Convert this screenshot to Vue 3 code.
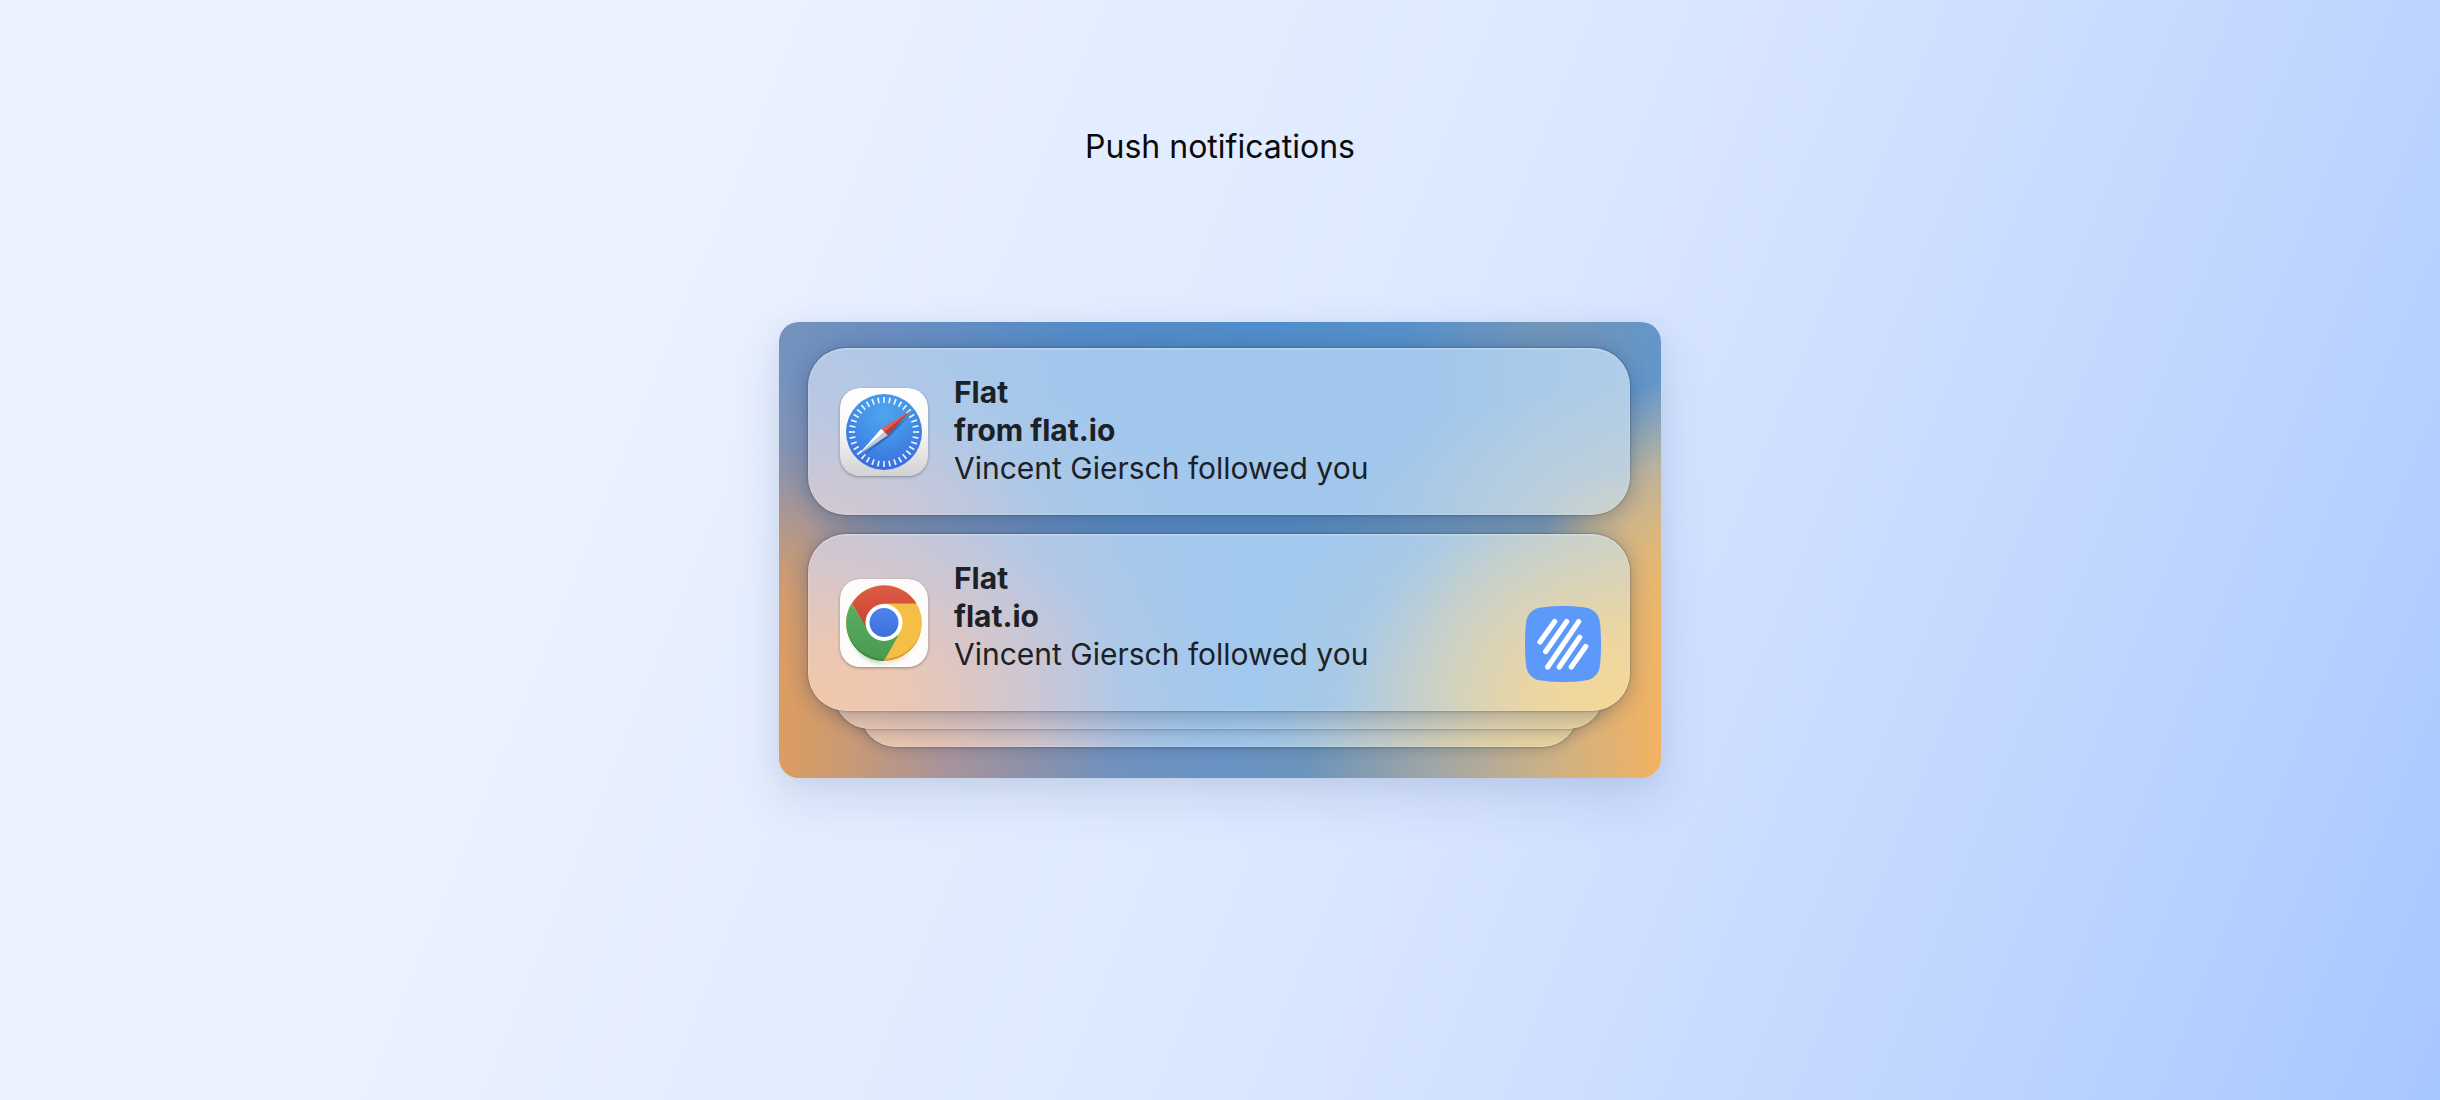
<script setup>
const notifications = [
  { id: 'safari', app: 'Safari', title: 'Flat', source: 'from flat.io', message: 'Vincent Giersch followed you', stacked: false },
  { id: 'chrome', app: 'Chrome', title: 'Flat', source: 'flat.io', message: 'Vincent Giersch followed you', stacked: true },
]
</script>

<template>
  <main class="page">
    <h1 class="heading">Push notifications</h1>

    <section class="desktop" aria-label="Notifications">
      <div v-for="n in notifications" :key="n.id" class="group">
        <article class="notification" :class="n.id">
          <svg v-if="n.id === 'safari'" class="app-icon" viewBox="0 0 88 88" role="img" :aria-label="n.app">
            <defs>
              <linearGradient id="safari-tile" x1="0" y1="0" x2="0" y2="1">
                <stop offset="0" stop-color="#ffffff" />
                <stop offset="0.45" stop-color="#fafafa" />
                <stop offset="1" stop-color="#d2d2d4" />
              </linearGradient>
              <radialGradient id="safari-dial" cx="0.5" cy="0.25" r="0.8">
                <stop offset="0" stop-color="#4fa5ec" />
                <stop offset="0.45" stop-color="#4391e9" />
                <stop offset="1" stop-color="#3a66dc" />
              </radialGradient>
            </defs>
            <rect width="88" height="88" rx="20" fill="url(#safari-tile)" />
            <circle cx="44" cy="44" r="38" fill="url(#safari-dial)" />
            <circle cx="44" cy="44" r="32" fill="none" stroke="#eaf4ff" stroke-width="6" pathLength="360" stroke-dasharray="3 7" stroke-dashoffset="1.5" />
            <path d="M72 25 49 49 21 69z" fill="#16336f" opacity="0.4" />
            <path d="M71 22.500 41.200 40.800 44.300 44z" fill="#ec5a4b" />
            <path d="M71 22.500 44.300 44 47.800 47.300z" fill="#c23a35" />
            <path d="M18 67 41.200 40.800 44.300 44z" fill="#ffffff" />
            <path d="M18 67 44.300 44 47.800 47.300z" fill="#c9ccd2" />
          </svg>

          <svg v-else class="app-icon" viewBox="0 0 88 88" role="img" :aria-label="n.app">
            <defs>
              <linearGradient id="chrome-red" x1="0" y1="0" x2="0" y2="1">
                <stop offset="0" stop-color="#de5b48" />
                <stop offset="1" stop-color="#c9432f" />
              </linearGradient>
              <linearGradient id="chrome-green" x1="0" y1="0" x2="0" y2="1">
                <stop offset="0" stop-color="#5aae62" />
                <stop offset="1" stop-color="#4a9950" />
              </linearGradient>
              <linearGradient id="chrome-blue" x1="0" y1="0" x2="0" y2="1">
                <stop offset="0" stop-color="#4f83ea" />
                <stop offset="1" stop-color="#3b70dd" />
              </linearGradient>
              <filter id="chrome-shadow" x="-20%" y="-20%" width="140%" height="140%">
                <feGaussianBlur stdDeviation="2.5" />
              </filter>
            </defs>
            <rect width="88" height="88" rx="20" fill="#fdfcfb" />
            <path d="M12 52a32 32 0 0 0 32 32z" fill="#3f8f48" opacity="0.5" filter="url(#chrome-shadow)" />
            <path d="M76 52a32 32 0 0 1-32 32z" fill="#e0a83c" opacity="0.4" filter="url(#chrome-shadow)" />
            <circle cx="44" cy="44" r="38" fill="#f3bf45" />
            <path d="M11.500 24.500A38 38 0 0 0 44 82L58 57 44 44 28 50z" fill="url(#chrome-green)" />
            <path d="M12 24.500a38 38 0 0 1 64.500 0H44V44L26 48z" fill="url(#chrome-red)" />
            <path d="M6.800 50a38 38 0 0 0 37.200 32v-2A38 38 0 0 1 6.800 50" fill="#3d8a45" />
            <path d="M81.200 50A38 38 0 0 1 44 82v-2a38 38 0 0 0 37.200-30" fill="#d99a36" />
            <circle cx="44" cy="43.500" r="18.500" fill="#ffffff" />
            <circle cx="44" cy="43.500" r="14.500" fill="url(#chrome-blue)" />
          </svg>

          <div class="text">
            <h2 class="title">{{ n.title }}</h2>
            <p class="source">{{ n.source }}</p>
            <p class="message">{{ n.message }}</p>
          </div>

          <svg v-if="n.stacked" class="site-icon" viewBox="0 0 76 76" role="img" aria-label="Flat">
            <path d="M38 0C48 0 58 1 63 2C69 4 73 8 74.500 14C75.500 20 76 28 76 38C76 48 75.500 56 74.500 62C73 68 69 72 63 74C58 75 48 76 38 76C28 76 18 75 13 74C7 72 3 68 1.500 62C.5 56 0 48 0 38C0 28 .5 20 1.500 14C3 8 7 4 13 2C18 1 28 0 38 0z" fill="#5d98fb" />
            <path d="M29.700 15.600 15 36M41.700 15.600 20.700 45.600M53.700 15.600 22.700 61M54.700 31.300 34.300 61M60.700 40.600 46.300 61" fill="none" stroke="#ffffff" stroke-width="5.200" stroke-linecap="round" />
          </svg>
        </article>

        <template v-if="n.stacked">
          <div class="layer middle"></div>
          <div class="layer back"></div>
        </template>
      </div>
    </section>
  </main>
</template>

<style>
body {
  margin: 0;
}
</style>

<style scoped>
.page {
  box-sizing: border-box;
  min-height: 100vh;
  padding: 127px 24px;
  display: flex;
  flex-direction: column;
  align-items: center;
  gap: 155px;
  font-family: Inter, "Liberation Sans", sans-serif;
  background: linear-gradient(112deg, #ebf1ff 0%, #eaf1ff 28%, #deeaff 52%, #d6e4ff 62%, #bfd5ff 83%, #a7c7ff 100%);
}

.heading {
  margin: 0;
  font-size: 32px;
  line-height: 40px;
  font-weight: 400;
  color: #0a0a0c;
}

.desktop {
  position: relative;
  isolation: isolate;
  box-sizing: border-box;
  width: 100%;
  max-width: 882px;
  padding: 26px 31px 31px 29px;
  display: flex;
  flex-direction: column;
  gap: 19px;
  border-radius: 20px;
  background:
    radial-gradient(ellipse 14% 76% at 0% 88%, #dd9c5f 0%, rgba(205, 155, 122, 0.85) 40%, rgba(170, 150, 155, 0.4) 70%, rgba(140, 148, 178, 0) 100%),
    radial-gradient(ellipse 18% 72% at 102% 84%, #f0b566 0%, rgba(226, 190, 125, 0.95) 45%, rgba(215, 190, 145, 0.7) 75%, rgba(150, 165, 175, 0) 100%),
    radial-gradient(ellipse 16% 24% at 87% 0%, rgba(116, 149, 182, 0.9) 0%, rgba(100, 147, 190, 0) 100%),
    linear-gradient(90deg, #7592bd 0%, #6a8ec0 12%, #548bc8 35%, #508dca 55%, #6296cc 100%);
  box-shadow: 0 20px 50px rgba(40, 60, 110, 0.13), 0 4px 24px rgba(40, 60, 110, 0.05);
}

/* warm glow rising from the bottom edge of the wallpaper */
.desktop::before {
  content: "";
  position: absolute;
  inset: 0;
  z-index: -1;
  border-radius: inherit;
  background: linear-gradient(90deg, #dd9d5f 0%, #c0987f 11%, #a8949b 19%, #8b91ab 29%, #7092be 38%, #6893c4 50%, #6c95bb 60%, #a0a6a7 74%, #cbb186 87%, #f2b262 100%);
  mask-image: linear-gradient(to top, #000 0%, #000 14%, transparent 72%);
}

.notification {
  position: relative;
  z-index: 2;
  box-sizing: border-box;
  min-height: 167px;
  display: flex;
  align-items: center;
  gap: 26px;
  padding-inline: 32px 29px;
  border-radius: 38px;
  box-shadow:
    0 0 2px rgba(20, 35, 60, 0.6),
    0 3px 20px rgba(30, 45, 75, 0.32),
    inset 0 0 2px rgba(255, 255, 255, 0.4),
    inset 0 2px 1px rgba(255, 255, 255, 0.15);
}

.safari {
  background:
    radial-gradient(ellipse 44% 110% at 0% 110%, #d8c8cb 0%, rgba(208, 200, 212, 0.75) 35%, rgba(185, 200, 226, 0.3) 70%, rgba(170, 200, 234, 0) 100%),
    radial-gradient(ellipse 30% 120% at 0% 30%, #bac7e3 0%, rgba(180, 200, 230, 0.5) 50%, rgba(165, 200, 236, 0) 100%),
    radial-gradient(ellipse 36% 90% at 102% 108%, #d6d4c6 0%, rgba(196, 208, 212, 0.65) 40%, rgba(165, 200, 234, 0) 100%),
    linear-gradient(90deg, #a5c8ed 0%, #a1c7ec 75%, #b0cde8 100%);
}

.chrome {
  min-height: 177px;
  background:
    radial-gradient(ellipse 50% 155% at 0% 98%, #f2c8a9 0%, rgba(237, 199, 178, 0.95) 25%, rgba(220, 198, 200, 0.7) 52%, rgba(188, 200, 226, 0.3) 78%, rgba(168, 200, 236, 0) 100%),
    radial-gradient(ellipse 46% 165% at 100% 98%, #f4d896 0%, rgba(239, 214, 158, 0.95) 25%, rgba(218, 212, 184, 0.75) 52%, rgba(185, 206, 215, 0.35) 76%, rgba(165, 201, 234, 0) 100%),
    linear-gradient(90deg, #c6c7d8 0%, #a8c8ec 38%, #a1c8ee 55%, #a1c8ee 75%, #c0d0d8 100%);
}

.layer {
  position: relative;
  height: 54px;
  margin-top: -36px;
  border-radius: 0 0 36px 36px;
  background: linear-gradient(90deg, #e9c4ab 0%, #dfc0b3 12%, #cdc2cc 25%, #a9c2e4 38%, #9dc4e9 48%, #a0c5e6 58%, #bccaca 72%, #dccfaa 86%, #e8d098 100%);
  box-shadow:
    0 0 2px rgba(20, 35, 60, 0.6),
    0 2px 14px rgba(30, 45, 75, 0.24),
    inset 0 -1px 1px rgba(255, 255, 255, 0.2);
}

.middle {
  z-index: 1;
  margin-inline: 26px;
}

.back {
  z-index: 0;
  margin-inline: 52px;
}

.app-icon {
  flex: none;
  width: 88px;
  height: 88px;
  border-radius: 20px;
  box-shadow: 0 1px 3px rgba(40, 40, 60, 0.4);
}

.text {
  flex: 1;
  min-width: 0;
  align-self: flex-start;
  padding-block: 25px;
  color: #1c2126;
}

.title,
.source,
.message {
  margin: 0;
  font-size: 30px;
  line-height: 38px;
}

.title,
.source {
  font-weight: 700;
}

.message {
  font-weight: 400;
}

.site-icon {
  flex: none;
  width: 76px;
  height: 76px;
  align-self: flex-end;
  margin-bottom: 29px;
}
</style>
